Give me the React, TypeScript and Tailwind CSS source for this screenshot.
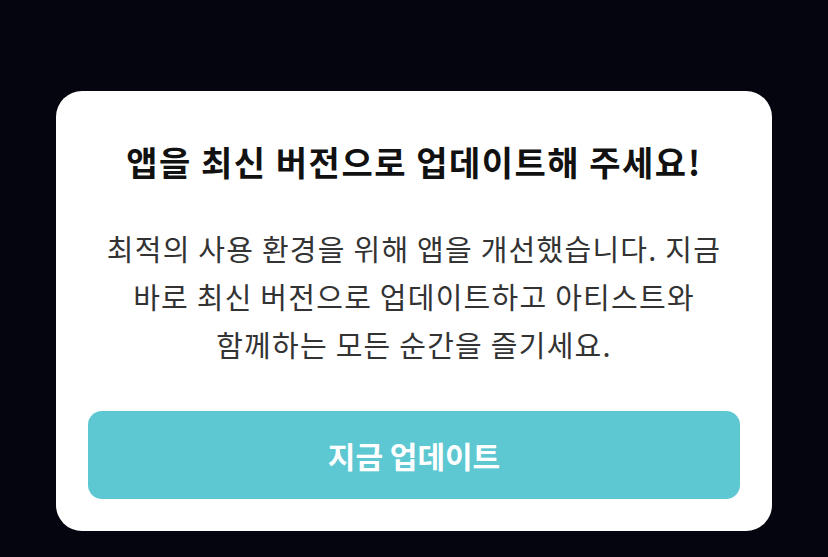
export default function App() {
  return (
    <div className="min-h-[557px] w-full bg-[#05050f] pt-[91px]" style={{ fontFamily: '"Noto Sans CJK KR", "Noto Sans", sans-serif' }}>
      <div className="mx-auto flex w-[716px] flex-col items-center rounded-[26px] bg-white px-8 pb-8 pt-[49px]">
        <h1 className="text-[34px] font-bold leading-[44px] tracking-[1.5px] text-[#111111]">앱을 최신 버전으로 업데이트해 주세요!</h1>
        <p className="mt-[40px] text-center text-[29px] leading-[48px] tracking-[1.25px] text-[#333333]">
          최적의 사용 환경을 위해 앱을 개선했습니다. 지금<br />바로 최신 버전으로 업데이트하고 아티스트와<br />함께하는 모든 순간을 즐기세요.
        </p>
        <button className="mt-[43px] flex h-[88px] w-full items-center justify-center rounded-[14px] bg-[#5ec8d2] text-[30px] font-bold text-white">
          지금 업데이트
        </button>
      </div>
    </div>
  );
}
